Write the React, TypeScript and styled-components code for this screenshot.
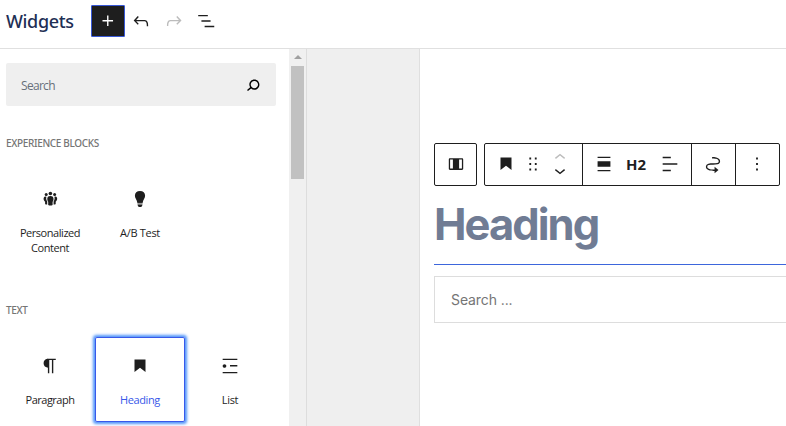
import React from "react";
import styled, { createGlobalStyle } from "styled-components";

const GlobalStyle = createGlobalStyle`
  * { box-sizing: border-box; }
  body { margin: 0; background: #fff; overflow: hidden; font-family: "Open Sans", "Noto Sans", sans-serif; color: #1e1e1e; }
`;

const Page = styled.div`
  display: flex;
  flex-direction: column;
  width: 786px;
  height: 426px;
  overflow: hidden;
`;

const Header = styled.header`
  display: flex;
  height: 49px;
  flex: none;
  border-bottom: 1px solid #e0e0e0;
  padding: 5px 0 0 6px;
`;

const Title = styled.h1`
  margin: 0;
  width: 85px;
  font: 500 18px/33px "Noto Sans", "Open Sans", sans-serif;
  letter-spacing: -0.35px;
  color: #1e2f55;
`;

const HeaderButton = styled.button<{ $primary?: boolean; $muted?: boolean }>`
  display: grid;
  place-items: center;
  width: ${(p) => (p.$primary ? 34 : 32.5)}px;
  height: 32px;
  padding: 0;
  border: ${(p) => (p.$primary ? "1px solid #3858d6" : "0")};
  border-radius: 1px;
  background: ${(p) => (p.$primary ? "#1e1e1e" : "transparent")};
  color: ${(p) => (p.$primary ? "#fff" : p.$muted ? "#bcbcbc" : "#1e1e1e")};
`;

const Body = styled.div`
  display: flex;
  flex: 1;
  min-height: 0;
`;

const Inserter = styled.aside`
  width: 289px;
  flex: none;
  padding: 14px 13px 0 6px;
`;

const SearchBox = styled.div`
  display: flex;
  align-items: center;
  justify-content: space-between;
  width: 270px;
  height: 43px;
  padding: 1px 12px 0 15px;
  border-radius: 2px;
  background: #efefef;
  font-size: 12px;
  letter-spacing: -0.7px;
  color: #67707a;
  svg { color: #000; }
`;

const CategoryTitle = styled.h2<{ $gap: number; $track: number }>`
  margin: ${(p) => p.$gap}px 0 0;
  font: 500 10px/14px "Noto Sans", "Open Sans", sans-serif;
  letter-spacing: ${(p) => p.$track}px;
  text-transform: uppercase;
  color: #757575;
`;

const TileGrid = styled.div<{ $gap: number }>`
  display: grid;
  grid-template-columns: repeat(3, 90px);
  margin: ${(p) => p.$gap}px 0 0 -1px;
`;

const Tile = styled.div<{ $active?: boolean; $track: number }>`
  display: flex;
  flex-direction: column;
  align-items: center;
  height: 85px;
  padding-top: 18px;
  border-radius: 2px;
  font-size: 11px;
  line-height: 15px;
  letter-spacing: ${(p) => p.$track}px;
  text-align: center;
  color: ${(p) => (p.$active ? "#3858e9" : "#1e1e1e")};
  box-shadow: ${(p) => (p.$active ? "inset 0 0 0 1px #3858e9, 0 0 3px 1.5px #4f94fa" : "none")};
  svg { color: #1e1e1e; margin-bottom: 15px; }
`;

const ScrollTrack = styled.div`
  width: 18px;
  flex: none;
  display: flex;
  flex-direction: column;
  align-items: center;
  padding: 6px 0 0 0;
  background: #f0f0f0;
  border-right: 1px solid #ddd;
`;

const ScrollArrow = styled.div`
  border: 4px solid transparent;
  border-top: 0;
  border-bottom: 4px solid #a0a0a0;
`;

const ScrollThumb = styled.div`
  width: 13px;
  height: 113px;
  margin-top: 7px;
  background: #c1c1c1;
`;

const Gutter = styled.div`
  width: 113px;
  flex: none;
  background: #efefef;
  border-right: 1px solid #dfdfdf;
`;

const Canvas = styled.main`
  flex: 1;
  min-width: 0;
  padding: 94px 0 0 14px;
`;

const Toolbar = styled.div`
  display: flex;
  gap: 7px;
  height: 43px;
`;

const ToolFrame = styled.div`
  display: flex;
  flex: none;
  border: 1px solid #1e1e1e;
  border-radius: 2px;
`;

const ToolGroup = styled.div<{ $width: number; $left?: number }>`
  display: flex;
  align-items: center;
  width: ${(p) => p.$width}px;
  padding: 0 0 1px ${(p) => p.$left ?? 10}px;
  & + & { border-left: 1px solid #1e1e1e; }
`;

const ToolCell = styled.div<{ $width: number }>`
  display: flex;
  flex-direction: column;
  flex: none;
  width: ${(p) => p.$width}px;
`;

const Level = styled.span`
  width: 32.5px;
  font: 700 15px/20px "Noto Sans", "Open Sans", sans-serif;
`;

const HeadingText = styled.h2`
  margin: 11px 0 0;
  height: 67px;
  font: 700 43.5px/54px Inter, sans-serif;
  letter-spacing: -1.95px;
  color: #707c94;
`;

const DropLine = styled.div`
  height: 1px;
  background: #3d66dc;
`;

const SiteSearch = styled.div`
  width: 380px;
  height: 47px;
  margin-top: 11px;
  padding-left: 16px;
  border: 1px solid #ddd;
  font: 400 14px/46px Inter, sans-serif;
  letter-spacing: -0.1px;
  color: #757575;
`;

const icons = {
  plus: "M11 12.5V17.5H12.5V12.5H17.5V11H12.5V6H11V11H6V12.5H11Z",
  undo: "M18.3 11.7c-.6-.6-1.4-.9-2.3-.9H6.7l2.9-3.3-1.1-1-4.5 5L8.5 16l1-1-2.7-2.7H16c.5 0 .9.2 1.3.5 1 1 1 3.4 1 4.5v.3h1.5v-.2c0-1.5 0-4.3-1.5-5.7z",
  redo: "M15.6 6.5l-1.1 1 2.9 3.3H8c-.9 0-1.7.3-2.3.9-1.4 1.5-1.4 4.2-1.4 5.6v.2h1.5v-.3c0-1.1 0-3.5 1-4.5.3-.3.7-.5 1.3-.5h9.2L14.5 15l1.1 1.1 4.6-4.6-4.6-5z",
  outline: "M3.5 5.4h10.5v1.5H3.5zM7 11.2h10v1.5H7zM10.5 17.2H21v1.5H10.5z",
  search: "M13.5 6C10.5 6 8 8.5 8 11.5c0 1.1.3 2.1.9 3l-3.4 3 1 1.1 3.4-2.9c1 .9 2.2 1.4 3.6 1.4 3 0 5.5-2.5 5.5-5.5C19 8.500 16.500 6 13.500 6zm0 9.500c-2.200 0-4-1.800-4-4s1.800-4 4-4 4 1.800 4 4-1.800 4-4 4z",
  heading: "M6 5V18.5911L12 13.8473L18 18.5911V5H6Z",
  paragraph: "M18.3 4H9.9v-.1l-.9.2c-2.3.4-4 2.4-4 4.8s1.7 4.4 4 4.8l.7.1V20h1.5V5.5h2.9V20h1.5V5.5h2.7V4z",
  list: "M4 4v1.5h16V4H4zm8 8.5h8V11h-8v1.5zM4 20h16v-1.5H4V20zm4-8c0-1.1-.9-2-2-2s-2 .9-2 2 .9 2 2 2 2-.9 2-2z",
  drag: "M8 7h2V5H8v2zm0 6h2v-2H8v2zm0 6h2v-2H8v2zm6-14v2h2V5h-2zm0 8h2v-2h-2v2zm0 6h2v-2h-2v2z",
  block: "M19 5.5H5V4h14v1.5ZM19 20H5v-1.5h14V20ZM5 9h14v6H5V9Z",
  left: "M4 19.8h8.9v-1.5H4v1.5zm8.9-15.6H4v1.5h8.9V4.2zm-8.9 7v1.5h16v-1.5H4z",
  more: "M13 19h-2v-2h2v2zm0-6h-2v-2h2v2zm0-6h-2V5h2v2z",
  move: "M19.75 9c0-1.257-.565-2.197-1.39-2.858-.797-.64-1.827-1.017-2.815-1.247-1.802-.42-3.703-.403-4.383-.396L11 4.5V6l.177-.001c.696-.006 2.416-.02 4.028.356.887.207 1.67.518 2.216.957.52.416.829.945.829 1.688 0 .592-.167.966-.407 1.23-.255.281-.656.508-1.236.674-1.19.34-2.82.346-4.607.346h-.077c-1.692 0-3.527 0-4.942.404-.732.209-1.424.545-1.935 1.108-.526.579-.796 1.33-.796 2.238 0 1.257.565 2.197 1.39 2.858.797.64 1.827 1.017 2.815 1.247 1.802.42 3.703.403 4.383.396L13 19.5h.714V22L18 18.5 13.714 15v3H13l-.177.001c-.696.006-2.416.02-4.028-.356-.887-.207-1.67-.518-2.216-.957-.52-.416-.829-.945-.829-1.688 0-.592.167-.966.407-1.23.255-.281.656-.508 1.237-.674 1.189-.34 2.819-.346 4.606-.346h.077c1.692 0 3.527 0 4.941-.404.732-.209 1.425-.545 1.936-1.108.526-.579.796-1.33.796-2.238z",
};

const Svg = styled.svg`
  display: block;
  flex: none;
  width: 22px;
  height: 22px;
  fill: currentColor;
`;

const Icon = ({ name }: { name: keyof typeof icons }) => (
  <Svg viewBox="0 0 24 24"><path d={icons[name]} /></Svg>
);

const PeopleIcon = () => (
  <Svg viewBox="0 0 22 22">
    <circle cx="11.4" cy="5.5" r="1.8" />
    <circle cx="7.2" cy="6.6" r="1.5" />
    <circle cx="15.6" cy="6.6" r="1.5" />
    <path d="M11.4 7.900c2.300 0 3.300 1.200 3.100 3.300-.1 1.500-.7 2.100-.9 2.600v3.100c-1.200.9-3.200.9-4.400 0v-3.100c-.2-.5-.8-1.100-.9-2.600-.2-2.100.8-3.300 3.100-3.300z" />
    <path d="M7.500 8.800c-.7 1.400-.3 3.200.7 4.800v2.900c-.8.2-1.700 0-2.100-.5v-2.300c-2-1.400-2-4.700.1-5.100zM15.300 8.800c.7 1.400.3 3.200-.7 4.800v2.900c.8.2 1.700 0 2.100-.5v-2.300c2-1.400 2-4.700-.1-5.100z" />
  </Svg>
);

const BulbIcon = () => (
  <Svg viewBox="0 0 22 22">
    <path d="M11 3c3.200 0 5.100 2 5.100 4.800 0 2.500-2 3.800-2.500 7.100H8.400C7.900 11.600 5.900 10.300 5.900 7.800 5.900 5 7.800 3 11 3z" />
    <path fill="#999" d="M8.400 14.900h5.200v1.500H8.400z" />
    <path d="M8.600 16.400h4.800c0 1.700-.9 2.600-2.400 2.600s-2.400-.9-2.400-2.600z" />
  </Svg>
);

const ColumnsIcon = () => (
  <Svg viewBox="0 0 22 22">
    <path fillRule="evenodd" d="M5 5.300h12c.7 0 1.200.5 1.200 1.200v9.200c0 .7-.5 1.200-1.200 1.200H5c-.7 0-1.200-.5-1.200-1.200V6.500c0-.7.5-1.200 1.200-1.200zm.1 1.300v9h2.800v-9zm9 0v9h2.800v-9z" />
  </Svg>
);

const Chevron = styled.svg<{ $muted?: boolean }>`
  display: block;
  width: 22px;
  height: 15px;
  fill: ${(p) => (p.$muted ? "#bcbcbc" : "#1e1e1e")};
`;

export default function App() {
  return (
    <>
      <GlobalStyle />
      <Page>
        <Header>
          <Title>Widgets</Title>
          <HeaderButton $primary aria-label="Add block"><Icon name="plus" /></HeaderButton>
          <HeaderButton aria-label="Undo"><Icon name="undo" /></HeaderButton>
          <HeaderButton $muted aria-label="Redo"><Icon name="redo" /></HeaderButton>
          <HeaderButton aria-label="List view"><Icon name="outline" /></HeaderButton>
        </Header>
        <Body>
          <Inserter>
            <SearchBox><span>Search</span><Icon name="search" /></SearchBox>
            <CategoryTitle $gap={30} $track={-0.34}>Experience Blocks</CategoryTitle>
            <TileGrid $gap={20}>
              <Tile $track={-0.45}><PeopleIcon />Personalized<br />Content</Tile>
              <Tile $track={-0.3}><BulbIcon />A/B Test</Tile>
            </TileGrid>
            <CategoryTitle $gap={48} $track={-0.34}>Text</CategoryTitle>
            <TileGrid $gap={20}>
              <Tile $track={-0.5}><Icon name="paragraph" />Paragraph</Tile>
              <Tile $active $track={-0.4}><Icon name="heading" />Heading</Tile>
              <Tile $track={-0.3}><Icon name="list" />List</Tile>
            </TileGrid>
          </Inserter>
          <ScrollTrack><ScrollArrow /><ScrollThumb /></ScrollTrack>
          <Gutter />
          <Canvas>
            <Toolbar>
              <ToolFrame>
                <ToolGroup $width={41}><ColumnsIcon /></ToolGroup>
              </ToolFrame>
              <ToolFrame>
                <ToolGroup $width={97}>
                  <ToolCell $width={27}><Icon name="heading" /></ToolCell>
                  <ToolCell $width={27}><Icon name="drag" /></ToolCell>
                  <ToolCell $width={22}>
                    <Chevron $muted viewBox="0 3 24 16"><path d="M6.500 12.400L12 8l5.500 4.400-.9 1.200L12 10l-4.500 3.600-1-1.200z" /></Chevron>
                    <Chevron viewBox="0 5 24 16"><path d="M17.500 11.600L12 16l-5.500-4.400.9-1.200L12 14l4.500-3.600 1 1.200z" /></Chevron>
                  </ToolCell>
                </ToolGroup>
                <ToolGroup $width={109}>
                  <ToolCell $width={33}><Icon name="block" /></ToolCell>
                  <Level>H2</Level>
                  <Icon name="left" />
                </ToolGroup>
                <ToolGroup $width={44}><Icon name="move" /></ToolGroup>
                <ToolGroup $width={44}><Icon name="more" /></ToolGroup>
              </ToolFrame>
            </Toolbar>
            <HeadingText>Heading</HeadingText>
            <DropLine />
            <SiteSearch>Search ...</SiteSearch>
          </Canvas>
        </Body>
      </Page>
    </>
  );
}
